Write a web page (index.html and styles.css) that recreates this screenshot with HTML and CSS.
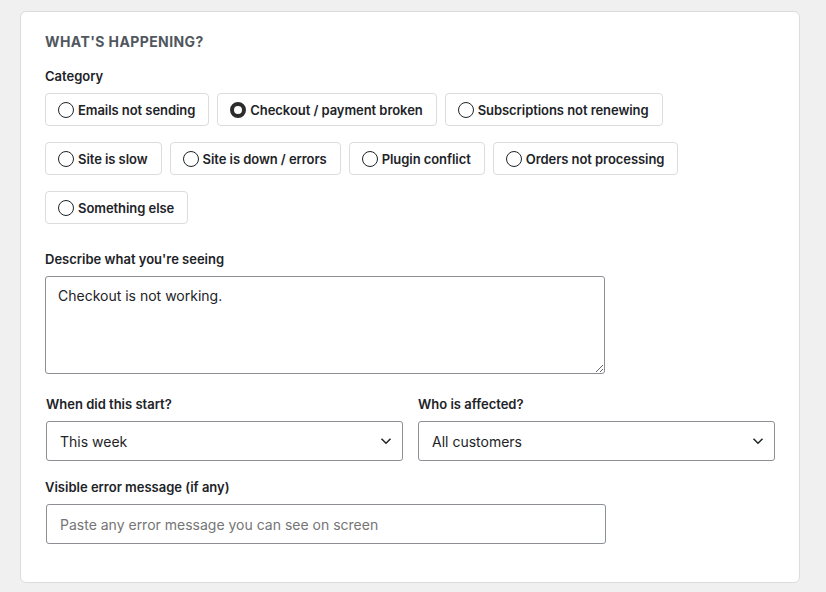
FILE: index.html
```html
<!DOCTYPE html>
<html>
<head>
<meta charset="utf-8" />
<title>What's happening</title>
<link rel="stylesheet" href="styles.css">
</head>
<body>
	<div class="card">
		<h2 class="card_title">What's happening?</h2>

		<div class="field">
			<p class="field_label">Category</p>
			<ul class="choice_list">
				<li><label class="choice"><input type="radio" name="cat"> Emails not sending</label></li>
				<li><label class="choice"><input type="radio" name="cat" checked> Checkout / payment broken</label></li>
				<li><label class="choice"><input type="radio" name="cat"> Subscriptions not renewing</label></li>
				<li><label class="choice"><input type="radio" name="cat"> Site is slow</label></li>
				<li><label class="choice"><input type="radio" name="cat"> Site is down / errors</label></li>
				<li><label class="choice"><input type="radio" name="cat"> Plugin conflict</label></li>
				<li><label class="choice"><input type="radio" name="cat"> Orders not processing</label></li>
				<li><label class="choice"><input type="radio" name="cat"> Something else</label></li>
			</ul>
		</div>

		<div class="field field_desc">
			<label class="field_label" for="desc">Describe what you're seeing</label>
			<textarea id="desc" class="text_area">Checkout is not working.</textarea>
		</div>

		<div class="field field_row">
			<div class="field_col">
				<label class="field_label" for="when">When did this start?</label>
				<div class="select_wrap">
					<select id="when" class="select_box">
						<option>This week</option>
					</select>
					<svg class="chevron" width="12" height="8" viewBox="0 0 12 8"><path d="M1.5 1.8 6 6.2l4.5-4.4" fill="none" stroke="#1d2327" stroke-width="1.5"/></svg>
				</div>
			</div>
			<div class="field_col">
				<label class="field_label" for="who">Who is affected?</label>
				<div class="select_wrap">
					<select id="who" class="select_box">
						<option>All customers</option>
					</select>
					<svg class="chevron" width="12" height="8" viewBox="0 0 12 8"><path d="M1.5 1.8 6 6.2l4.5-4.4" fill="none" stroke="#1d2327" stroke-width="1.5"/></svg>
				</div>
			</div>
		</div>

		<div class="field field_last">
			<label class="field_label" for="err">Visible error message (if any)</label>
			<input id="err" class="text_input" type="text" placeholder="Paste any error message you can see on screen">
		</div>
	</div>
</body>
</html>
```

FILE: styles.css
```css
html, body, div, p, h2, ul, li {
	padding: 0;
	margin: 0;
}

body {
	background: #f0f0f1;
	font-family: "Inter", "Liberation Sans", sans-serif;
	color: #1d2327;
	padding: 11px 26px 10px 20px;
}

li {
	list-style: none;
}

.card {
	background: #fff;
	border: 1px solid #dcdcde;
	border-radius: 6px;
	padding: 21px 24px 18px 24px;
}

.card_title {
	font-size: 14px;
	font-weight: 700;
	line-height: 18px;
	letter-spacing: 0.4px;
	text-transform: uppercase;
	color: #50575e;
	margin-bottom: 17px;
}

.field {
	margin-bottom: 20px;
}

.field_desc {
	margin-bottom: 22px;
}

.field_row {
	margin-bottom: 18px;
}

.field_label {
	display: block;
	font-size: 13px;
	font-weight: 600;
	line-height: 16px;
	margin-bottom: 9px;
}

/* radio pills */
.choice_list {
	display: flex;
	flex-wrap: wrap;
	gap: 16px 8px;
	padding-bottom: 7px;
}

.choice {
	display: flex;
	align-items: center;
	gap: 4px;
	height: 33px;
	box-sizing: border-box;
	padding: 0 13px 0 12px;
	border: 1px solid #dcdcde;
	border-radius: 4px;
	font-size: 13px;
	font-weight: 600;
	letter-spacing: -0.06px;
	cursor: pointer;
}

.choice input {
	appearance: none;
	-webkit-appearance: none;
	width: 16px;
	height: 16px;
	margin: 0;
	border: 1px solid #1d2327;
	border-radius: 50%;
	background: #fff;
	box-sizing: border-box;
}

.choice input:checked {
	border: 4.5px solid #2c2c2c;
}

/* inputs */
.text_area {
	display: block;
	width: 560px;
	height: 98px;
	box-sizing: border-box;
	padding: 9px 12px;
	border: 1px solid #8c8f94;
	border-radius: 3px;
	font-family: inherit;
	font-size: 14px;
	line-height: 20px;
	color: #1d2327;
}

.field_row {
	display: flex;
	gap: 15px;
	padding-left: 1px;
}

.field_col {
	flex: 1;
}

.select_wrap {
	position: relative;
}

.select_box {
	appearance: none;
	-webkit-appearance: none;
	display: block;
	width: 100%;
	height: 40px;
	box-sizing: border-box;
	padding: 0 32px 0 13px;
	border: 1px solid #8c8f94;
	border-radius: 3px;
	background: #fff;
	font-family: inherit;
	font-size: 14px;
	color: #1d2327;
}

.chevron {
	position: absolute;
	right: 11px;
	top: 16px;
	pointer-events: none;
}

.text_input {
	display: block;
	width: 560px;
	height: 40px;
	box-sizing: border-box;
	margin-left: 1px;
	padding: 0 13px;
	border: 1px solid #8c8f94;
	border-radius: 3px;
	font-family: inherit;
	font-size: 14px;
	color: #1d2327;
}

.text_input::placeholder {
	color: #757575;
}
```
